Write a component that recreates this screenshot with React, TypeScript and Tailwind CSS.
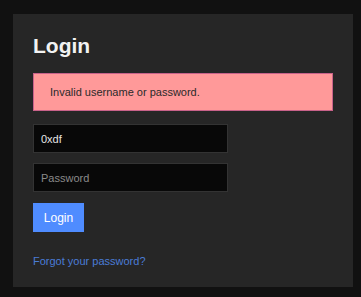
export default function App() {
  return (
    <div className="h-[297px] w-[361px] bg-[#111111] pt-[14px] pl-[13px] font-['Liberation_Sans',Arial,sans-serif]">
      <div className="w-[340px] h-[273px] bg-[#262626] px-[20px] pt-[20px]">
        <h1 className="text-[21px] leading-[24px] font-bold text-[#f2f2f2]">Login</h1>

        <div className="mt-[15px] w-[300px] h-[38px] flex items-center pl-[16px] bg-[#ff9999] border border-[#c8628a] text-[11px] text-[#2a2a2a]">
          Invalid username or password.
        </div>

        <form className="mt-[13px] flex flex-col" onSubmit={(e) => e.preventDefault()}>
          <input
            type="text"
            defaultValue="0xdf"
            className="w-[195px] h-[29px] bg-[#080808] border border-[#333333] px-[7px] text-[11px] text-[#e6e6e6] outline-none"
          />
          <input
            type="password"
            placeholder="Password"
            className="mt-[10px] w-[195px] h-[29px] bg-[#080808] border border-[#333333] px-[7px] text-[11px] text-[#e6e6e6] placeholder:text-[#8a8a8a] outline-none"
          />
          <button
            type="submit"
            className="mt-[11px] w-[51px] h-[29px] bg-[#4f8cff] text-white text-[12px]"
          >
            Login
          </button>
        </form>

        <a href="#" className="block mt-[21px] text-[11px] text-[#4a7cd6]">
          Forgot your password?
        </a>
      </div>
    </div>
  );
}
